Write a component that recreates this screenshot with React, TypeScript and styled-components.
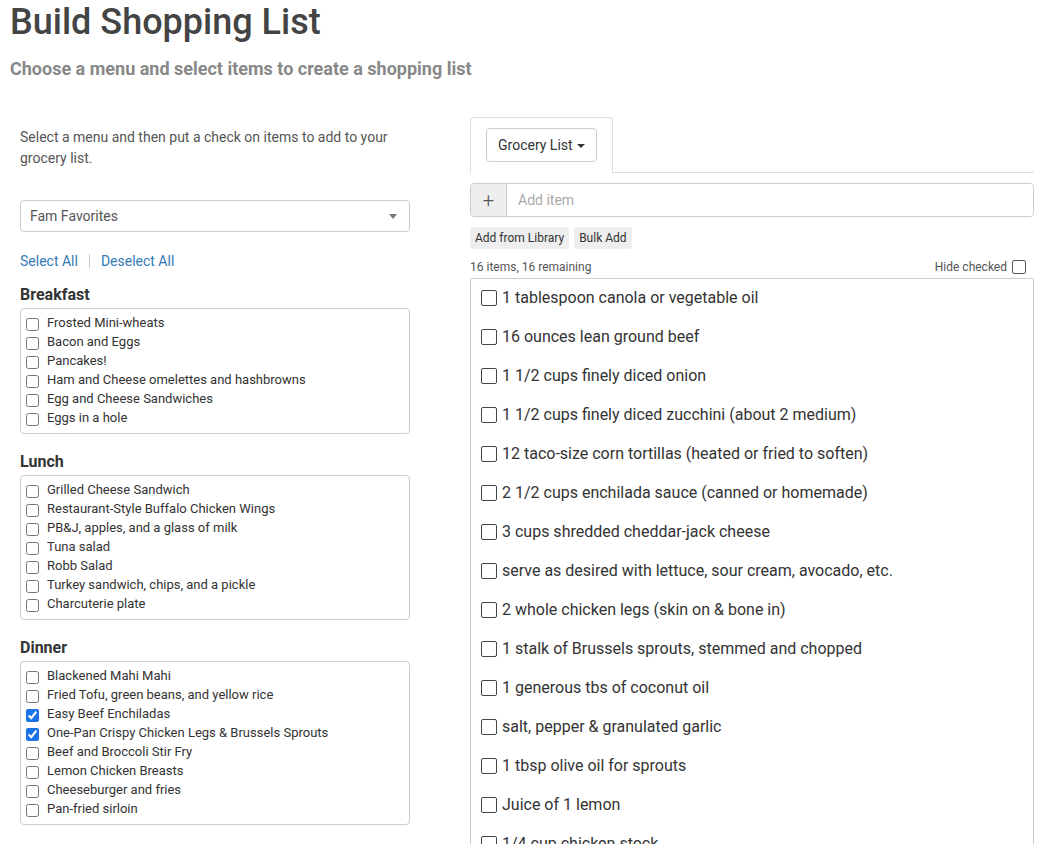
import React from 'react';
import styled, { createGlobalStyle } from 'styled-components';

const menus = [
  {
    title: 'Breakfast',
    items: [
      { name: 'Frosted Mini-wheats' },
      { name: 'Bacon and Eggs' },
      { name: 'Pancakes!' },
      { name: 'Ham and Cheese omelettes and hashbrowns' },
      { name: 'Egg and Cheese Sandwiches' },
      { name: 'Eggs in a hole' },
    ],
  },
  {
    title: 'Lunch',
    items: [
      { name: 'Grilled Cheese Sandwich' },
      { name: 'Restaurant-Style Buffalo Chicken Wings' },
      { name: 'PB&J, apples, and a glass of milk' },
      { name: 'Tuna salad' },
      { name: 'Robb Salad' },
      { name: 'Turkey sandwich, chips, and a pickle' },
      { name: 'Charcuterie plate' },
    ],
  },
  {
    title: 'Dinner',
    items: [
      { name: 'Blackened Mahi Mahi' },
      { name: 'Fried Tofu, green beans, and yellow rice' },
      { name: 'Easy Beef Enchiladas', checked: true },
      { name: 'One-Pan Crispy Chicken Legs & Brussels Sprouts', checked: true },
      { name: 'Beef and Broccoli Stir Fry' },
      { name: 'Lemon Chicken Breasts' },
      { name: 'Cheeseburger and fries' },
      { name: 'Pan-fried sirloin' },
    ],
  },
];

const groceries = [
  '1 tablespoon canola or vegetable oil',
  '16 ounces lean ground beef',
  '1 1/2 cups finely diced onion',
  '1 1/2 cups finely diced zucchini (about 2 medium)',
  '12 taco-size corn tortillas (heated or fried to soften)',
  '2 1/2 cups enchilada sauce (canned or homemade)',
  '3 cups shredded cheddar-jack cheese',
  'serve as desired with lettuce, sour cream, avocado, etc.',
  '2 whole chicken legs (skin on & bone in)',
  '1 stalk of Brussels sprouts, stemmed and chopped',
  '1 generous tbs of coconut oil',
  'salt, pepper & granulated garlic',
  '1 tbsp olive oil for sprouts',
  'Juice of 1 lemon',
  '1/4 cup chicken stock',
  '2 cloves garlic',
];

const App: React.FC = () => {
  return (
    <Page>
      <GlobalStyle />
      <Title>Build Shopping List</Title>
      <Subtitle>Choose a menu and select items to create a shopping list</Subtitle>
      <Columns>
        <Left>
          <Intro>Select a menu and then put a check on items to add to your grocery list.</Intro>
          <Select>
            <span>Fam Favorites</span>
            <Caret />
          </Select>
          <Links>
            <Link>Select All</Link>
            <Sep />
            <Link>Deselect All</Link>
          </Links>
          <Menus>
            {menus.map((m) => (
              <Section key={m.title}>
                <SectionTitle>{m.title}</SectionTitle>
                <MenuBox>
                  {m.items.map((it) => (
                    <MenuItem key={it.name}>
                      <SmallCheck type="checkbox" defaultChecked={!!it.checked} />
                      <span>{it.name}</span>
                    </MenuItem>
                  ))}
                </MenuBox>
              </Section>
            ))}
          </Menus>
        </Left>
        <Right>
          <Tabs>
            <Tab>
              <DropButton>
                Grocery List <Caret small />
              </DropButton>
            </Tab>
          </Tabs>
          <InputGroup>
            <Addon>+</Addon>
            <AddInput placeholder="Add item" />
          </InputGroup>
          <Actions>
            <SmallButton>Add from Library</SmallButton>
            <SmallButton>Bulk Add</SmallButton>
          </Actions>
          <Status>
            <span>16 items, 16 remaining</span>
            <HideLabel>
              Hide checked <SquareCheck type="checkbox" />
            </HideLabel>
          </Status>
          <ListBox>
            {groceries.map((g) => (
              <ListItem key={g}>
                <SquareCheck type="checkbox" />
                <span>{g}</span>
              </ListItem>
            ))}
          </ListBox>
        </Right>
      </Columns>
    </Page>
  );
};

const GlobalStyle = createGlobalStyle`
  body {
    margin: 0;
    background: #fff;
    font-family: Roboto, "Helvetica Neue", Arial, sans-serif;
    color: #333;
  }
`;

const Page = styled.div`
  padding: 0 10px;
  height: 844px;
  overflow: hidden;
`;

const Title = styled.h1`
  margin: 3px 0 0;
  font-size: 36px;
  line-height: 38px;
  font-weight: 500;
  color: #444;
`;

const Subtitle = styled.h2`
  margin: 17px 0 0;
  font-size: 18px;
  line-height: 21px;
  font-weight: 700;
  color: #888;
`;

const Columns = styled.div`
  display: flex;
  padding-left: 10px;
  margin-top: 28px;
`;

const Left = styled.div`
  width: 390px;
  padding-top: 20px;
`;

const Right = styled.div`
  width: 564px;
  margin-left: 60px;
  padding-top: 10px;
`;

const Intro = styled.p`
  margin: 0;
  font-size: 14px;
  line-height: 21px;
  color: #555;
`;

const Select = styled.div`
  margin-top: 31px;
  height: 32px;
  box-sizing: border-box;
  border: 1px solid #ccc;
  border-radius: 4px;
  padding: 0 12px 0 9px;
  display: flex;
  align-items: center;
  justify-content: space-between;
  font-size: 14px;
  color: #555;
`;

const Caret = styled.span<{ small?: boolean }>`
  display: inline-block;
  width: 0;
  height: 0;
  border-left: 4px solid transparent;
  border-right: 4px solid transparent;
  border-top: ${(p) => (p.small ? 4 : 5)}px solid ${(p) => (p.small ? '#333' : '#777')};
  margin-left: ${(p) => (p.small ? '1px' : '0')};
  vertical-align: middle;
`;

const Links = styled.div`
  display: flex;
  align-items: center;
  margin-top: 20px;
  font-size: 14px;
  line-height: 18px;
`;

const Link = styled.a`
  color: #337ab7;
  cursor: pointer;
`;

const Sep = styled.span`
  width: 1px;
  height: 14px;
  background: #ccc;
  margin: 0 11px;
`;

const Menus = styled.div`
  margin-top: 16px;
  display: flex;
  flex-direction: column;
  gap: 19px;
`;

const Section = styled.div``;

const SectionTitle = styled.h3`
  margin: 0 0 4px;
  font-size: 16px;
  line-height: 18px;
  font-weight: 700;
  color: #333;
`;

const MenuBox = styled.div`
  border: 1px solid #ccc;
  border-radius: 4px;
  padding: 4px 5px 6px;
`;

const MenuItem = styled.label`
  display: flex;
  align-items: center;
  height: 19px;
  font-size: 13px;
  color: #333;
  span {
    margin-left: 8px;
  }
`;

const SmallCheck = styled.input`
  margin: 3px 0 0;
  width: 13px;
  height: 13px;
  accent-color: #1a73e8;
`;

const Tabs = styled.div`
  display: flex;
  border-bottom: 1px solid #ddd;
`;

const Tab = styled.div`
  padding: 10px 15px 0;
  border: 1px solid #ddd;
  border-bottom: none;
  border-radius: 4px 4px 0 0;
  margin-bottom: -1px;
  background: #fff;
  height: 56px;
  box-sizing: border-box;
`;

const DropButton = styled.button`
  height: 34px;
  padding: 0 11px;
  border: 1px solid #ccc;
  border-radius: 4px;
  background: #fff;
  font-family: Roboto, sans-serif;
  font-size: 14px;
  color: #333;
`;

const InputGroup = styled.div`
  display: flex;
  margin-top: 10px;
  height: 34px;
  box-sizing: border-box;
  border: 1px solid #ccc;
  border-radius: 4px;
  overflow: hidden;
`;

const Addon = styled.span`
  width: 35px;
  background: #eee;
  border-right: 1px solid #ccc;
  display: flex;
  align-items: center;
  justify-content: center;
  font-size: 20px;
  font-weight: 300;
  color: #555;
`;

const AddInput = styled.input`
  flex: 1;
  border: none;
  outline: none;
  padding: 0 11px;
  font-family: Roboto, sans-serif;
  font-size: 14px;
  color: #555;
  &::placeholder {
    color: #aaa;
  }
`;

const Actions = styled.div`
  display: flex;
  gap: 5px;
  margin-top: 10px;
`;

const SmallButton = styled.button`
  height: 22px;
  padding: 0 5px;
  border: none;
  border-radius: 3px;
  background: #eee;
  font-family: Roboto, sans-serif;
  font-size: 12px;
  color: #333;
`;

const Status = styled.div`
  display: flex;
  justify-content: space-between;
  align-items: center;
  margin-top: 10px;
  font-size: 12px;
  line-height: 16px;
  color: #555;
`;

const HideLabel = styled.label`
  display: flex;
  align-items: center;
  gap: 5px;
  margin-right: 8px;
`;

const SquareCheck = styled.input`
  appearance: none;
  margin: 0;
  width: 14px;
  height: 14px;
  border: 1.5px solid #555;
  border-radius: 2px;
  background: #fff;
  box-sizing: border-box;
`;

const ListBox = styled.div`
  margin-top: 3px;
  border: 1px solid #ccc;
  border-radius: 2px;
  padding: 0 10px;
`;

const ListItem = styled.label`
  display: flex;
  align-items: center;
  height: 39px;
  box-sizing: border-box;
  padding-bottom: 2px;
  font-size: 16px;
  color: #333;
  ${SquareCheck} {
    width: 16px;
    height: 16px;
    border-width: 1.5px;
    border-color: #444;
  }
  span {
    margin-left: 5px;
  }
`;

export default App;
